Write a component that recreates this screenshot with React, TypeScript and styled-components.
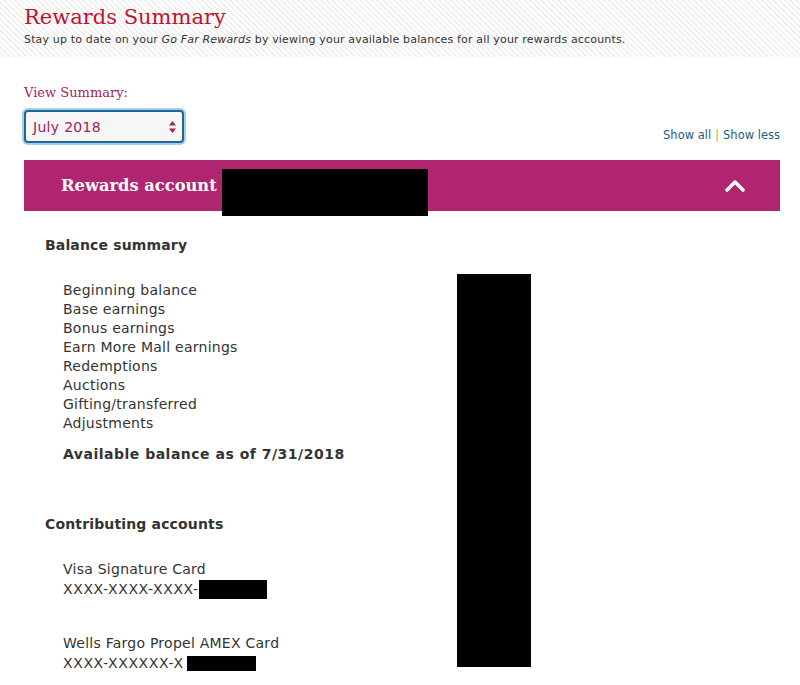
import React from 'react';
import styled, { createGlobalStyle } from 'styled-components';

const GlobalStyle = createGlobalStyle`
  html, body {
    margin: 0;
    padding: 0;
    background: #ffffff;
  }
  body {
    font-family: 'DejaVu Sans', Verdana, sans-serif;
    color: #333333;
  }
`;

const SERIF = `'DejaVu Serif', Georgia, serif`;
const SANS = `'DejaVu Sans', Verdana, sans-serif`;
const MAGENTA = '#b0256f';

const Hero = styled.header`
  height: 57px;
  padding: 4px 24px 0;
  box-sizing: border-box;
  background: repeating-linear-gradient(
    45deg,
    #ffffff 0px,
    #ffffff 2px,
    #f1f1f1 2px,
    #f1f1f1 4px
  );
`;

const Title = styled.h1`
  margin: 0;
  font-family: ${SERIF};
  font-weight: normal;
  font-size: 21px;
  line-height: 26px;
  color: #c1122f;
`;

const Intro = styled.p`
  margin: 3px 0 0;
  font-family: ${SANS};
  font-size: 11px;
  line-height: 14px;
  letter-spacing: 0.16px;
  color: #333333;

  em {
    font-style: italic;
  }
`;

const Main = styled.main`
  padding: 27px 20px 0 24px;
`;

const FieldLabel = styled.div`
  font-family: ${SERIF};
  font-size: 13px;
  line-height: 18px;
  color: #a3205f;
`;

const Toolbar = styled.div`
  display: flex;
  align-items: flex-end;
  justify-content: space-between;
  margin-top: 8px;
`;

const SelectBox = styled.div`
  width: 160px;
  height: 33px;
  box-sizing: border-box;
  display: flex;
  align-items: center;
  justify-content: space-between;
  padding: 0 6px 0 7px;
  border: 2px solid #1a6a93;
  border-radius: 4px;
  background: #f6f6f6;
  box-shadow: 0 0 0 2px #a9cdef;
  font-family: ${SANS};
  font-size: 14px;
  letter-spacing: 0.3px;
  color: #a3205f;
`;

const Links = styled.div`
  font-family: ${SANS};
  font-size: 11.5px;
  line-height: 14px;
  color: #1b5e7e;
  padding-bottom: 1px;
`;

const Sep = styled.span`
  color: #e0a030;
  margin: 0 4px;
`;

const Bar = styled.div`
  margin-top: 17px;
  height: 51px;
  background: ${MAGENTA};
  display: flex;
  align-items: flex-start;
  padding: 0 35px 0 37px;
`;

const BarTitle = styled.h2`
  margin: 0;
  align-self: center;
  font-family: ${SERIF};
  font-weight: bold;
  font-size: 16.3px;
  color: #ffffff;
`;

const Redact = styled.span<{ $w: number; $h: number; $gap?: number }>`
  display: inline-block;
  flex: none;
  width: ${(p) => p.$w}px;
  height: ${(p) => p.$h}px;
  margin-left: ${(p) => p.$gap ?? 0}px;
  background: #000000;
  vertical-align: top;
`;

const BarRedact = styled(Redact)`
  margin-top: 9px;
`;

const Chevron = styled.svg`
  margin-left: auto;
  align-self: center;
`;

const Body = styled.div`
  position: relative;
  padding: 25px 0 0 21px;
`;

const ValueColumn = styled(Redact)`
  position: absolute;
  left: 433px;
  top: 63px;
`;

const SectionTitle = styled.h3`
  margin: 0;
  font-family: ${SANS};
  font-weight: bold;
  font-size: 14px;
  line-height: 19px;
  letter-spacing: 0.15px;
  color: #333333;
`;

const List = styled.ul`
  list-style: none;
  margin: 26px 0 0;
  padding: 0 0 0 18px;
`;

const Item = styled.li`
  font-family: ${SANS};
  font-size: 14px;
  line-height: 19px;
  letter-spacing: 0.25px;
  color: #333333;
`;

const Total = styled(Item)`
  margin-top: 12px;
  font-weight: bold;
  letter-spacing: 0.5px;
`;

const Accounts = styled.div`
  margin-top: 51px;
`;

const Card = styled.div`
  padding-left: 18px;
  margin-top: 25px;
  font-family: ${SANS};
  font-size: 14px;
  line-height: 20px;
  letter-spacing: 0.25px;
  color: #333333;

  & + & {
    margin-top: 34px;
  }
`;

const CardNumber = styled.div`
  display: flex;
  align-items: center;
  letter-spacing: 0.6px;
`;

const balanceRows = [
  'Beginning balance',
  'Base earnings',
  'Bonus earnings',
  'Earn More Mall earnings',
  'Redemptions',
  'Auctions',
  'Gifting/transferred',
  'Adjustments',
];

export default function App() {
  return (
    <>
      <GlobalStyle />
      <Hero>
        <Title>Rewards Summary</Title>
        <Intro>
          Stay up to date on your <em>Go Far Rewards</em> by viewing your available
          balances for all your rewards accounts.
        </Intro>
      </Hero>
      <Main>
        <FieldLabel>View Summary:</FieldLabel>
        <Toolbar>
          <SelectBox>
            <span>July 2018</span>
            <svg width="7" height="12" viewBox="0 0 7 12">
              <path d="M3.5 0 L7 4.5 L0 4.5 Z M3.5 12 L7 7.5 L0 7.5 Z" fill="#a3205f" />
            </svg>
          </SelectBox>
          <Links>
            Show all<Sep>|</Sep>Show less
          </Links>
        </Toolbar>
        <Bar>
          <BarTitle>Rewards account</BarTitle>
          <BarRedact $w={206} $h={47} $gap={5} />
          <Chevron width="20" height="13" viewBox="0 0 20 13">
            <polyline
              points="2,11 10,3 18,11"
              fill="none"
              stroke="#ffffff"
              strokeWidth="3.5"
              strokeLinecap="round"
              strokeLinejoin="round"
            />
          </Chevron>
        </Bar>
        <Body>
          <ValueColumn $w={74} $h={393} />
          <SectionTitle>Balance summary</SectionTitle>
          <List>
            {balanceRows.map((r) => (
              <Item key={r}>{r}</Item>
            ))}
            <Total>Available balance as of 7/31/2018</Total>
          </List>
          <Accounts>
            <SectionTitle>Contributing accounts</SectionTitle>
            <Card>
              <div>Visa Signature Card</div>
              <CardNumber>
                XXXX-XXXX-XXXX-
                <Redact $w={68} $h={19} />
              </CardNumber>
            </Card>
            <Card>
              <div>Wells Fargo Propel AMEX Card</div>
              <CardNumber>
                XXXX-XXXXXX-X
                <Redact $w={69} $h={15} $gap={3} />
              </CardNumber>
            </Card>
          </Accounts>
        </Body>
      </Main>
    </>
  );
}
